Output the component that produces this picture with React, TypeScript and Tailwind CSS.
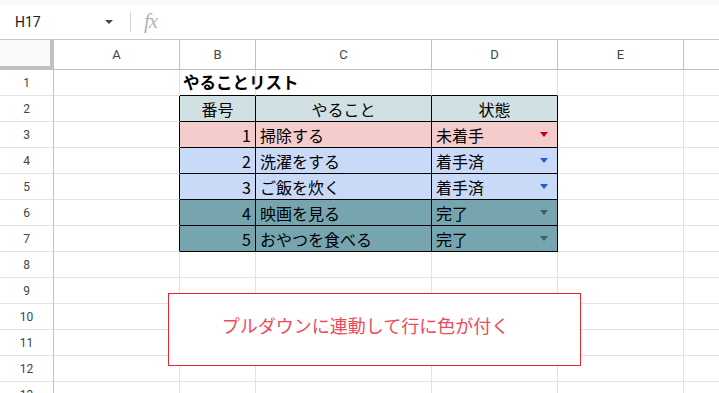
import React from "react";

const COLS = [
  { key: "A", w: 126 },
  { key: "B", w: 76 },
  { key: "C", w: 176 },
  { key: "D", w: 126 },
  { key: "E", w: 126 },
  { key: "F", w: 200 },
];

type Row = { no: string; task: string; status: string; bg: string; arrow: string };

const ROWS: Row[] = [
  { no: "1", task: "掃除する", status: "未着手", bg: "bg-[#f4cccc]", arrow: "border-t-[#cc0000]" },
  { no: "2", task: "洗濯をする", status: "着手済", bg: "bg-[#c9daf8]", arrow: "border-t-[#1a5fd8]" },
  { no: "3", task: "ご飯を炊く", status: "着手済", bg: "bg-[#c9daf8]", arrow: "border-t-[#1a5fd8]" },
  { no: "4", task: "映画を見る", status: "完了", bg: "bg-[#76a5af]", arrow: "border-t-[#3f5f64]" },
  { no: "5", task: "おやつを食べる", status: "完了", bg: "bg-[#76a5af]", arrow: "border-t-[#3f5f64]" },
];

const font = "font-['Noto_Sans_CJK_JP','Noto_Sans',sans-serif]";

function Cell({
  ci,
  ri,
  children,
  className = "",
}: {
  ci: number;
  ri: number;
  children?: React.ReactNode;
  className?: string;
}) {
  // table occupies rows 2-7 and columns B-D
  const inTable = ri >= 2 && ri <= 7;
  const rightBlack = inTable && ci >= 0 && ci <= 3;
  const bottomBlack = ri >= 1 && ri <= 7 && ci >= 1 && ci <= 3;
  return (
    <div
      className={`h-full shrink-0 border-r border-b overflow-hidden ${
        rightBlack ? "border-r-black" : "border-r-[#e2e2e2]"
      } ${bottomBlack ? "border-b-black" : "border-b-[#e2e2e2]"} ${className}`}
      style={{ width: COLS[ci].w }}
    >
      {children}
    </div>
  );
}

function Arrow({ color }: { color: string }) {
  return (
    <span
      className={`w-0 h-0 border-l-[4px] border-r-[4px] border-t-[5px] border-l-transparent border-r-transparent ${color}`}
    />
  );
}

export default function App() {
  const rowCount = 13;

  const renderCells = (ri: number) => {
    const r = ri >= 3 && ri <= 7 ? ROWS[ri - 3] : null;
    return COLS.map((_, ci) => {
      if (ri === 1 && ci === 1) {
        return (
          <Cell key={ci} ci={ci} ri={ri} className="overflow-visible relative">
            <span className="absolute left-[3px] top-[0px] whitespace-nowrap text-[16.5px] font-bold text-black">
              やることリスト
            </span>
          </Cell>
        );
      }
      if (ri === 2 && ci >= 1 && ci <= 3) {
        const label = ["番号", "やること", "状態"][ci - 1];
        return (
          <Cell key={ci} ci={ci} ri={ri} className="bg-[#d0e0e3] flex items-center justify-center text-[16px] text-black">
            {label}
          </Cell>
        );
      }
      if (r && ci === 1) {
        return (
          <Cell key={ci} ci={ci} ri={ri} className={`${r.bg} flex items-center justify-end pr-[4px] text-[16px] text-black`}>
            {r.no}
          </Cell>
        );
      }
      if (r && ci === 2) {
        return (
          <Cell key={ci} ci={ci} ri={ri} className={`${r.bg} flex items-center pl-[4px] text-[16px] text-black`}>
            {r.task}
          </Cell>
        );
      }
      if (r && ci === 3) {
        return (
          <Cell key={ci} ci={ci} ri={ri} className={`${r.bg} flex items-center justify-between pl-[4px] pr-[9px] text-[16px] text-black`}>
            <span>{r.status}</span>
            <Arrow color={r.arrow} />
          </Cell>
        );
      }
      return <Cell key={ci} ci={ci} ri={ri} />;
    });
  };

  return (
    <div className={`w-[719px] h-[393px] overflow-hidden bg-white relative ${font}`}>
      {/* top strip */}
      <div className="h-[5px] bg-[#f8f9fa]" />

      {/* formula bar */}
      <div className="h-[35px] flex items-center border-b border-[#c7c7c7] font-['Roboto',sans-serif]">
        <div className="w-[130px] flex items-center pl-[15px] pr-[17px] justify-between">
          <span className="text-[14px] text-[#222]">H17</span>
          <span className="w-0 h-0 border-l-[4px] border-r-[4px] border-t-[4px] border-l-transparent border-r-transparent border-t-[#444]" />
        </div>
        <div className="w-px h-[20px] bg-[#d5d5d5]" />
        <span className="ml-[13px] -mt-[2px] text-[21px] leading-none italic text-[#b3b3b3] font-['Liberation_Serif',serif] tracking-[-1px]">
          fx
        </span>
      </div>

      {/* column headers */}
      <div className="h-[30px] flex border-b border-[#c0c0c0] font-['Roboto',sans-serif]">
        <div className="w-[54px] h-full shrink-0 bg-[#f8f9fa] border-r-[4px] border-b-[3px] border-[#c0c0c0] -mb-px" />
        {COLS.map((c) => (
          <div
            key={c.key}
            className="h-full shrink-0 border-r border-[#c0c0c0] flex items-center justify-center text-[13px] text-[#444]"
            style={{ width: c.w }}
          >
            {c.key}
          </div>
        ))}
      </div>

      {/* grid rows */}
      {Array.from({ length: rowCount }, (_, i) => i + 1).map((ri) => (
        <div key={ri} className="h-[26px] flex">
          <div className="w-[54px] h-full shrink-0 border-r border-r-[#c0c0c0] border-b border-b-[#e2e2e2] flex items-center justify-center text-[12px] text-[#444] font-['Roboto',sans-serif]">
            {ri}
          </div>
          {renderCells(ri)}
        </div>
      ))}

      {/* text box drawing */}
      <div className="absolute left-[168px] top-[293px] w-[413px] h-[73px] border border-[#e3262f] bg-white flex items-center justify-center pr-[18px] pb-[8px]">
        <span className="text-[18px] text-[#ee4a5a]">プルダウンに連動して行に色が付く</span>
      </div>
    </div>
  );
}
